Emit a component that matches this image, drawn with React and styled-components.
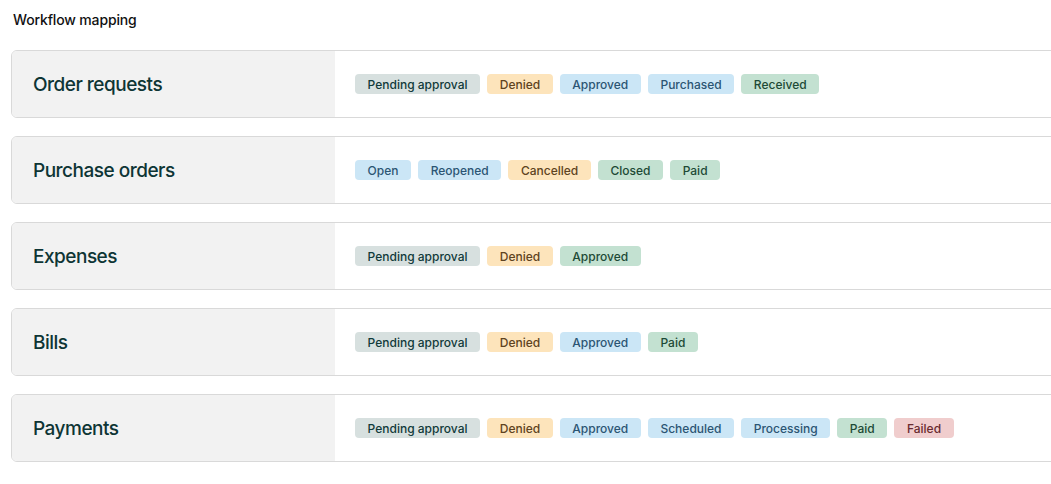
import React from "react";
import styled, { createGlobalStyle } from "styled-components";

const Global = createGlobalStyle`
  html, body { margin: 0; padding: 0; background: #ffffff; overflow: hidden; }
  body { font-family: "Inter", "Liberation Sans", sans-serif; }
`;

const Page = styled.div`
  padding: 11px 0 0 11px;
  width: 1060px;
`;

const Heading = styled.h1`
  margin: 0 0 21px 2px;
  font-size: 14px;
  line-height: 18px;
  font-weight: 500;
  color: #111;
  letter-spacing: -0.15px;
`;

const List = styled.div`
  display: flex;
  flex-direction: column;
  gap: 18px;
`;

const Card = styled.div`
  display: flex;
  height: 66px;
  border: 1px solid #d9d9d9;
  border-radius: 6px;
  overflow: hidden;
  width: 1060px;
`;

const Label = styled.div`
  width: 323px;
  flex: none;
  background: #f2f2f2;
  display: flex;
  align-items: center;
  padding-left: 21px;
  box-sizing: border-box;
  font-size: 19px;
  font-weight: 500;
  color: #0e3535;
  letter-spacing: -0.5px;
`;

const Badges = styled.div`
  display: flex;
  align-items: center;
  gap: 7px;
  padding-left: 20px;
`;

const tones = {
  gray: { bg: "#d7e0df", fg: "#113a3a" },
  orange: { bg: "#fde4bb", fg: "#5e4321" },
  blue: { bg: "#cbe6f6", fg: "#2b5573" },
  green: { bg: "#c3e1d1", fg: "#1d4a36" },
  red: { bg: "#f0cdcd", fg: "#6a2b30" },
};

const Badge = styled.span`
  display: inline-flex;
  align-items: center;
  height: 20px;
  padding: 0 12.6px;
  border-radius: 4px;
  font-size: 12px;
  font-weight: 500;
  background: ${(p) => tones[p.$tone].bg};
  color: ${(p) => tones[p.$tone].fg};
`;

const rows = [
  {
    title: "Order requests",
    badges: [
      ["Pending approval", "gray"],
      ["Denied", "orange"],
      ["Approved", "blue"],
      ["Purchased", "blue"],
      ["Received", "green"],
    ],
  },
  {
    title: "Purchase orders",
    badges: [
      ["Open", "blue"],
      ["Reopened", "blue"],
      ["Cancelled", "orange"],
      ["Closed", "green"],
      ["Paid", "green"],
    ],
  },
  {
    title: "Expenses",
    badges: [
      ["Pending approval", "gray"],
      ["Denied", "orange"],
      ["Approved", "green"],
    ],
  },
  {
    title: "Bills",
    badges: [
      ["Pending approval", "gray"],
      ["Denied", "orange"],
      ["Approved", "blue"],
      ["Paid", "green"],
    ],
  },
  {
    title: "Payments",
    badges: [
      ["Pending approval", "gray"],
      ["Denied", "orange"],
      ["Approved", "blue"],
      ["Scheduled", "blue"],
      ["Processing", "blue"],
      ["Paid", "green"],
      ["Failed", "red"],
    ],
  },
];

export default function App() {
  return (
    <Page>
      <Global />
      <Heading>Workflow mapping</Heading>
      <List>
        {rows.map((r) => (
          <Card key={r.title}>
            <Label>{r.title}</Label>
            <Badges>
              {r.badges.map(([t, tone]) => (
                <Badge key={t} $tone={tone}>
                  {t}
                </Badge>
              ))}
            </Badges>
          </Card>
        ))}
      </List>
    </Page>
  );
}
